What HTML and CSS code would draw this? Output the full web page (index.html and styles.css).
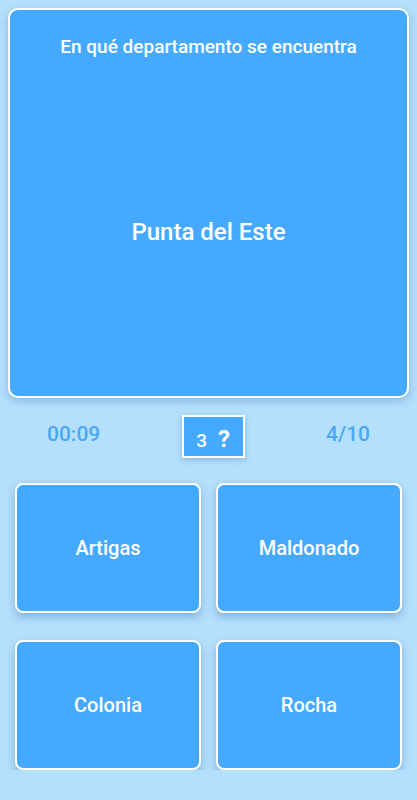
FILE: index.html
```html
<!DOCTYPE html>
<html lang="es">
<head>
    <meta charset="utf-8" />
    <title>Quiz Departamentos</title>
    <link rel="stylesheet" href="styles.css">
</head>
<body>
    <main class="quiz">
        <section class="question-card">
            <p class="question-title">En qué departamento se encuentra</p>
            <div class="question-place">Punta del Este</div>
        </section>

        <div class="stats">
            <span class="timer">00:09</span>
            <div class="hint">
                <span class="hint-inner"><span class="hint-count">3</span><span class="hint-mark">?</span></span>
            </div>
            <span class="progress">4/10</span>
        </div>

        <div class="answers">
            <button class="answer">Artigas</button>
            <button class="answer">Maldonado</button>
            <button class="answer">Colonia</button>
            <button class="answer">Rocha</button>
        </div>
    </main>
</body>
</html>
```

FILE: styles.css
```css
/* Page */
body {
    margin: 0;
    background-color: #b4e0fd;
    font-family: Roboto, "Noto Sans", sans-serif;
    color: white;
}

.quiz {
    padding: 8px 8px 0 8px;
}

/* Question card */
.question-card {
    height: 386px;
    border: 2px solid white;
    border-radius: 10px;
    background-color: #45aaff;
    box-shadow: 0 3px 8px rgba(40, 90, 140, 0.3);
    display: flex;
    flex-direction: column;
    align-items: center;
}

.question-title {
    margin: 25px 0 0 0;
    font-size: 19px;
    font-weight: 500;
}

.question-place {
    margin-top: 160px;
    font-size: 24px;
    font-weight: 500;
}

/* Timer, hint, progress */
.stats {
    display: flex;
    justify-content: space-between;
    align-items: center;
    padding: 0 39px;
    height: 77px;
}

.timer, .progress {
    color: #4aa8f4;
    font-size: 21px;
    font-weight: 500;
    margin-bottom: 6px;
}

.hint {
    width: 59px;
    height: 39px;
    border: 2px solid white;
    background-color: #45aaff;
    box-shadow: 0 2px 6px rgba(40, 90, 140, 0.3);
    display: flex;
    justify-content: center;
    align-items: center;
}

.hint-inner {
    padding-top: 4px;
}

.hint-count {
    font-size: 19px;
    font-weight: 500;
}

.hint-mark {
    margin-left: 11px;
    font-size: 24px;
    font-weight: 700;
}

/* Answer buttons */
.answers {
    display: grid;
    grid-template-columns: 186px 186px;
    grid-auto-rows: 130px;
    column-gap: 15px;
    row-gap: 27px;
    padding: 0 7px;
    margin-top: 8px;
}

.answer {
    border: 2px solid white;
    border-radius: 8px;
    background-color: #45aaff;
    box-shadow: 0 4px 8px rgba(40, 90, 140, 0.35);
    color: white;
    font-family: Roboto, "Noto Sans", sans-serif;
    font-size: 20px;
    font-weight: 500;
}
```
